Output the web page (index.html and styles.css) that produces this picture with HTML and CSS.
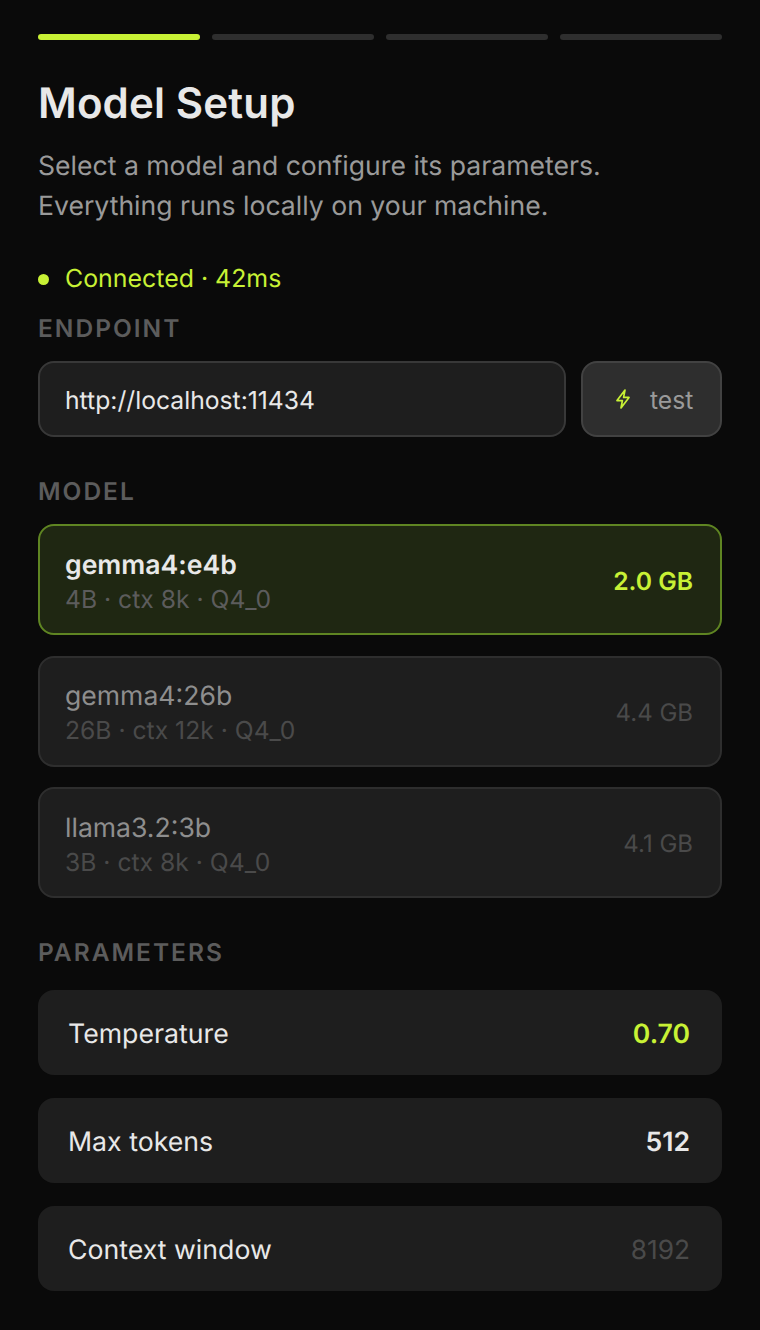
FILE: index.html
```html
<!DOCTYPE html>
<html lang="en">
<head>
<meta charset="utf-8">
<title>Model Setup</title>
<link rel="stylesheet" href="styles.css">
</head>
<body>
<main class="page">
  <div class="steps">
    <span class="step step-active"></span>
    <span class="step"></span>
    <span class="step"></span>
    <span class="step"></span>
  </div>
  <h1 class="title">Model Setup</h1>
  <p class="intro">Select a model and configure its parameters.<br>Everything runs locally on your machine.</p>
  <div class="status"><span class="status-dot"></span>Connected · 42ms</div>
  <h2 class="label label-endpoint">ENDPOINT</h2>
  <div class="endpoint">
    <div class="url">http://localhost:11434</div>
    <button class="test" type="button">
      <svg class="bolt" width="16" height="22" viewBox="0 0 16 22" fill="none" stroke="#c8f135" stroke-width="1.7" stroke-linejoin="round"><path d="M10 2 L2 12.6 H7.4 L6 20 L14 9.4 H8.6 Z"/></svg>
      <span class="test-text">test</span>
    </button>
  </div>
  <h2 class="label label-model">MODEL</h2>
  <div class="models">
    <div class="model model-active">
      <div class="model-info"><div class="model-name">gemma4:e4b</div><div class="model-meta">4B · ctx 8k · Q4_0</div></div>
      <div class="model-size">2.0 GB</div>
    </div>
    <div class="model">
      <div class="model-info"><div class="model-name">gemma4:26b</div><div class="model-meta">26B · ctx 12k · Q4_0</div></div>
      <div class="model-size">4.4 GB</div>
    </div>
    <div class="model">
      <div class="model-info"><div class="model-name">llama3.2:3b</div><div class="model-meta">3B · ctx 8k · Q4_0</div></div>
      <div class="model-size">4.1 GB</div>
    </div>
  </div>
  <h2 class="label label-params">PARAMETERS</h2>
  <div class="params">
    <div class="param"><span>Temperature</span><span class="val val-accent">0.70</span></div>
    <div class="param"><span>Max tokens</span><span class="val val-strong">512</span></div>
    <div class="param"><span>Context window</span><span class="val val-dim">8192</span></div>
  </div>
</main>
</body>
</html>
```
FILE: styles.css
```css
* { box-sizing: border-box; }
html, body { margin: 0; height: 100%; }
body { background: #0a0a0a; color: #e8e8e8; font-family: Inter, "Liberation Sans", sans-serif; overflow: hidden; text-rendering: geometricPrecision; font-variation-settings: "opsz" 14; }
.page { padding: 34px 38px 0; display: flex; flex-direction: column; }
.steps { display: flex; gap: 12px; }
.step { flex: 1; height: 6px; border-radius: 3px; background: #2e2e2e; }
.step-active { background: #c8f135; }
.title { margin: 36px 0 0; font-size: 42px; line-height: 56px; font-weight: 600; letter-spacing: 0.15px; color: #e8e8e8; font-variation-settings: "opsz" 21; }
.intro { margin: 14px 0 0; font-size: 26.6px; line-height: 40px; color: #9a9a9a; }
.status { margin-top: 37px; display: flex; align-items: center; gap: 16px; font-size: 24.9px; line-height: 32px; color: #c8f135; }
.status-dot { width: 11px; height: 11px; border-radius: 50%; background: #c8f135; }
.label { margin: 0; font-size: 24.5px; line-height: 32px; font-weight: 600; letter-spacing: 2px; color: #5c5c5c; }
.label-endpoint { margin-top: 17px; }
.label-model { margin-top: 38px; }
.label-params { margin-top: 37.6px; }
.endpoint { margin-top: 17px; display: flex; gap: 15px; }
.url { flex: 1; height: 76px; display: flex; align-items: center; padding: 2px 25px 0; background: #1e1e1e; border: 2px solid #383838; border-radius: 16px; font-size: 24.7px; color: #e8e8e8; }
.test { width: 141px; height: 76px; display: flex; align-items: center; justify-content: flex-start; gap: 19px; background: #2e2e2e; border: 2px solid #424242; border-radius: 16px; font: inherit; font-size: 24.7px; color: #9a9a9a; padding: 0 0 0 32px; }
.test-text { padding-top: 2px; }
.bolt { display: block; }
.models { margin-top: 17.1px; display: flex; flex-direction: column; gap: 20.2px; }
.model { height: 111.3px; display: flex; align-items: center; justify-content: space-between; padding: 0 27px 0 25px; background: #1e1e1e; border: 2px solid #2e2e2e; border-radius: 16px; }
.model-info { padding-top: 4px; }
.model-name { font-size: 26.6px; line-height: 34px; color: #8e8e8e; }
.model-meta { font-size: 24.7px; line-height: 34px; color: #4a4a4a; }
.model-size { font-size: 24px; padding-top: 2px; color: #4a4a4a; }
.model-active { background: #1f2712; border-color: #5f8522; }
.model-active .model-name { font-weight: 600; color: #e8e8e8; }
.model-active .model-meta { color: #5c5c5c; }
.model-active .model-size { font-size: 24.7px; font-weight: 600; color: #c8f135; }
.params { margin-top: 22px; display: flex; flex-direction: column; gap: 22.5px; }
.param { height: 85.5px; display: flex; align-items: center; justify-content: space-between; padding: 3px 32px 0 30px; background: #1e1e1e; border-radius: 16px; font-size: 26.7px; color: #e8e8e8; }
.val { font-size: 26.6px; }
.val-accent { font-weight: 600; color: #c8f135; }
.val-strong { font-weight: 600; color: #e8e8e8; }
.val-dim { font-size: 26.3px; color: #4a4a4a; }
```
